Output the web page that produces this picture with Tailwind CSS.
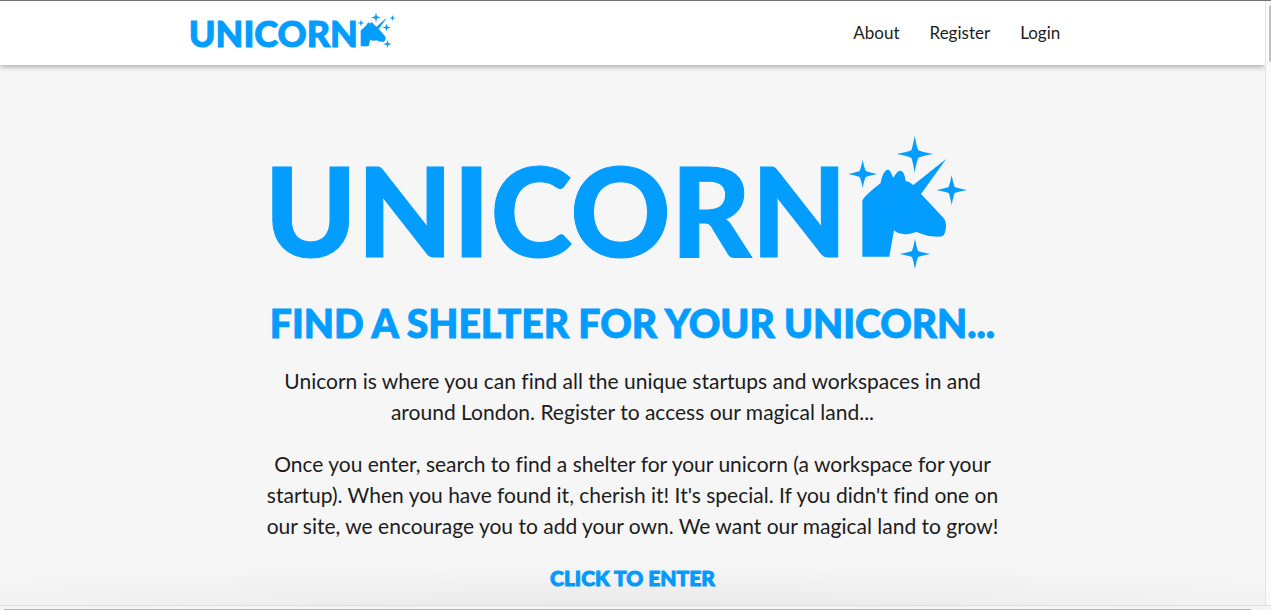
<!DOCTYPE html>
<html lang="en">
<head>
<meta charset="utf-8">
<meta name="viewport" content="width=device-width, initial-scale=1">
<title>Unicorn</title>
<script src="https://cdn.jsdelivr.net/npm/@tailwindcss/browser@4"></script>
</head>
<body class="h-screen overflow-hidden flex flex-col bg-[#fafafa] border-t border-[#747474] font-['Lato',sans-serif] text-[#1c1c1c] [font-variant-ligatures:none]">
  <div class="flex flex-1 min-h-0">
    <div class="relative flex flex-col flex-1 min-w-0 overflow-hidden bg-[#f6f6f6] border-r border-[#e4e4e4]">
      <header class="relative shrink-0 bg-white shadow-[0_1px_6px_rgba(0,0,0,0.4)]">
        <div class="w-[70%] mx-auto h-16 flex items-center justify-between">
          <a href="#" aria-label="Unicorn home" class="flex items-center h-16 -ml-px text-[#039dff]">
            <span class="text-[36px] leading-9 font-black [-webkit-text-stroke:1px]">UNICORN</span>
            <svg class="w-10 h-9 -mt-1.5 -ml-px" viewBox="0 0 40 36" fill="currentColor" aria-hidden="true">
              <path d="M4 34V18.500L9.500 13.500Q11 9 13 12Q15 9 16.500 12.500L19.500 15L28.500 7L21.500 17L28 24.500Q29 29 26.500 29.500Q22 29.500 19.500 28Q16 29 13 27.500L11.500 34Z" stroke="currentColor" stroke-width="0.600"/>
              <path d="M19 0.500L20 4.300L24 5.500L20 6.600L19 10.500L18 6.600L14 5.500L18 4.300Z M4 7.500L4.800 10.300L7.500 11L4.800 11.800L4 14.500L3.200 11.800L0.500 11L3.200 10.300Z M29.500 11.500L30.400 14.600L33.500 15.500L30.400 16.400L29.500 19.500L28.600 16.400L25.500 15.500L28.600 14.600Z M35.500 3L36.200 5.300L38.500 6L36.200 6.700L35.500 9L34.800 6.700L32.500 6L34.800 5.300Z M30.500 28L31.400 31.100L34.500 32L31.400 32.900L30.500 36L29.600 32.900L26.500 32L29.600 31.100Z"/>
            </svg>
          </a>
          <nav class="flex text-[17px] leading-6" aria-label="Main">
            <a href="#" class="px-[15px]">About</a>
            <a href="#" class="px-[15px]">Register</a>
            <a href="#" class="px-[15px]">Login</a>
          </nav>
        </div>
      </header>
      <main class="w-[736px] max-w-full mx-auto pt-[70px] text-center">
        <h1 class="flex items-start justify-start text-[#039dff]">
          <span class="mt-3 text-[124px] leading-[124px] font-black [-webkit-text-stroke:1px]">UNICORN</span>
          <svg class="w-[120px] h-[134px] shrink-0" viewBox="20 16 360 402" fill="currentColor" aria-hidden="true">
            <path d="M66 381V213Q69 206 78 197Q98 177 121 160C123 145 131 120 143 120C152 121 154 136 159 144C163 139 170 123 180 123C190 124 194 139 196 154Q208 156 219 166L318 87L242 193L309 264Q317 272 317 291Q315 313 307 319Q297 323 275 320C252 317 240 311 228 307C215 311 203 315 189 313C173 311 166 307 161 302L147 381Z"/>
            <path d="M223 18Q228 46 234 62Q248 68 279 73Q248 78 234 84Q228 98 223 129Q218 98 213 84Q198 78 169 73Q198 68 213 62Q218 46 223 18Z M67 90Q71 112 76 124Q88 129 110 133Q88 137 76 142Q71 153 67 175Q63 153 58 142Q46 137 24 133Q46 129 58 124Q63 112 67 90Z M334 136Q338 159 343 172Q356 177 380 181Q356 185 343 190Q338 203 334 227Q330 203 325 190Q312 185 288 181Q312 177 325 172Q330 159 334 136Z M224 327Q228 350 233 364Q246 369 270 373Q246 377 233 382Q228 395 224 418Q220 395 215 382Q202 377 178 373Q202 369 215 364Q220 350 224 327Z"/>
          </svg>
        </h1>
        <h2 class="mt-[30px] text-[39px] leading-[44px] font-black text-[#039dff] whitespace-nowrap [-webkit-text-stroke:1px]">FIND A SHELTER FOR YOUR UNICORN...</h2>
        <p class="mt-5 text-[21px] leading-[31px]">Unicorn is where you can find all the unique startups and workspaces in and around London. Register to access our magical land...</p>
        <p class="mt-[21px] text-[21px] leading-[31px]">Once you enter, search to find a shelter for your unicorn (a workspace for your startup). When you have found it, cherish it! It's special. If you didn't find one on our site, we encourage you to add your own. We want our magical land to grow!</p>
        <a href="#" class="inline-block mt-[21px] text-[21px] leading-[31px] font-black text-[#039dff] [-webkit-text-stroke:1px]">CLICK TO ENTER</a>
      </main>
      <div class="absolute inset-x-0 bottom-0 h-10 bg-radial-[70%_100%_at_50%_100%] from-black/5 to-transparent pointer-events-none"></div>
    </div>
    <div class="w-[5px] shrink-0 pl-[3px] pt-1" aria-hidden="true">
      <div class="h-[57px] rounded-l bg-[#c1c1c1]"></div>
    </div>
  </div>
  <div class="h-[5px] shrink-0 border-t border-[#dedede] pt-[3px] pl-1 pr-5 bg-[#f4f4f4]" aria-hidden="true">
    <div class="h-px bg-[#b5b5b5]"></div>
  </div>
</body>
</html>
